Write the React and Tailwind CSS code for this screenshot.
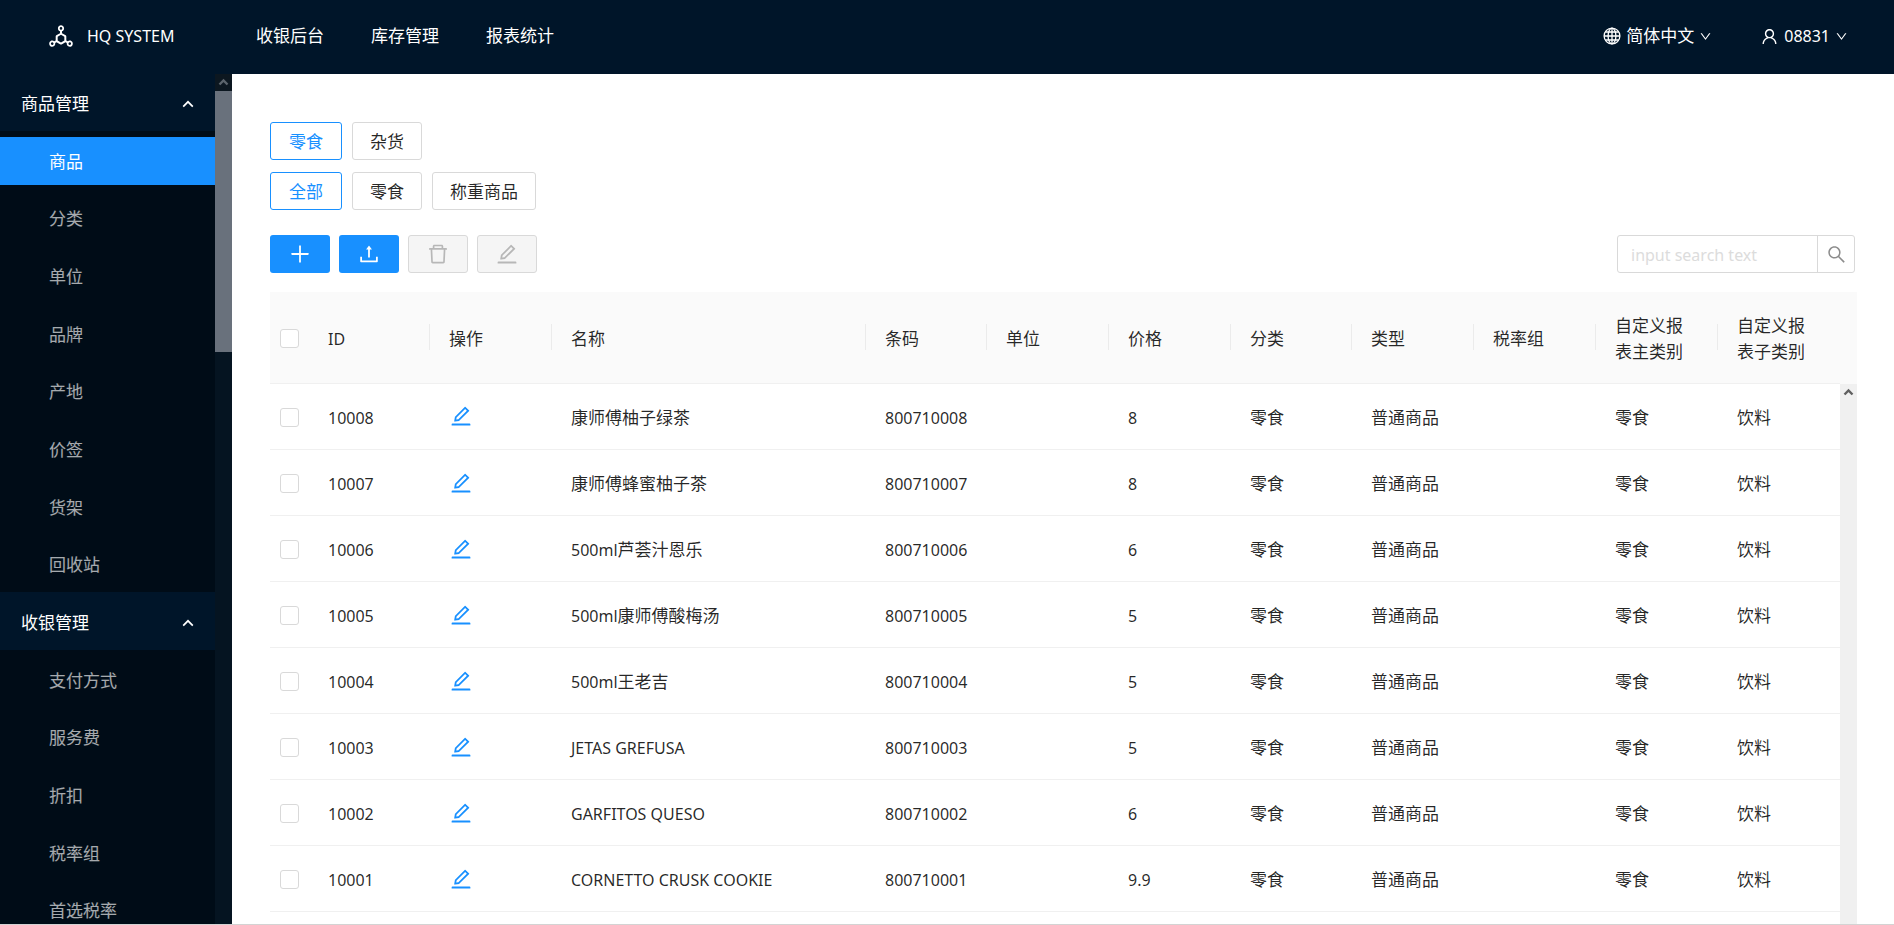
import React from "react";
import {
  AiOutlineDeploymentUnit,
  AiOutlineUser,
  AiOutlineDown,
  AiOutlinePlus,
  AiOutlineUpload,
  AiOutlineDelete,
  AiOutlineEdit,
  AiOutlineSearch,
} from "react-icons/ai";

const topNav = ["收银后台", "库存管理", "报表统计"];

const menu = [
  {
    title: "商品管理",
    height: "h-[461px]",
    items: ["商品", "分类", "单位", "品牌", "产地", "价签", "货架", "回收站"],
  },
  {
    title: "收银管理",
    height: "h-[288px]",
    items: ["支付方式", "服务费", "折扣", "税率组", "首选税率"],
  },
];

const columns = [
  "ID",
  "操作",
  "名称",
  "条码",
  "单位",
  "价格",
  "分类",
  "类型",
  "税率组",
  "自定义报表主类别",
  "自定义报表子类别",
];

const products = [
  { id: "10008", name: "康师傅柚子绿茶", price: "8" },
  { id: "10007", name: "康师傅蜂蜜柚子茶", price: "8" },
  { id: "10006", size: "500ml", name: "芦荟汁恩乐", price: "6" },
  { id: "10005", size: "500ml", name: "康师傅酸梅汤", price: "5" },
  { id: "10004", size: "500ml", name: "王老吉", price: "5" },
  { id: "10003", name: "JETAS GREFUSA", price: "5" },
  { id: "10002", name: "GARFITOS QUESO", price: "6" },
  { id: "10001", name: "CORNETTO CRUSK COOKIE", price: "9.9" },
];

function ScrollArrow({ className }) {
  return (
    <svg className={className} width="17" height="17" viewBox="0 0 17 17" aria-hidden="true">
      <path d="M4.5 10.5 L8.5 6.5 L12.5 10.5" fill="none" stroke="currentColor" strokeWidth="2.4" />
    </svg>
  );
}

function ChevronUp() {
  return (
    <svg width="12" height="8" viewBox="0 0 12 8" aria-hidden="true">
      <path d="M1.2 6.6 L6 1.8 L10.8 6.6" fill="none" stroke="currentColor" strokeWidth="1.7" />
    </svg>
  );
}

function Globe() {
  return (
    <svg width="18" height="18" viewBox="0 0 18 18" fill="none" stroke="currentColor" strokeWidth="1.3" aria-hidden="true">
      <circle cx="9" cy="9" r="7.9" />
      <ellipse cx="9" cy="9" rx="3.9" ry="7.9" />
      <path d="M9 1.1 V16.9 M1.1 9 H16.9 M2.3 5 H15.7 M2.3 13 H15.7" />
    </svg>
  );
}

function Checkbox({ label }) {
  return (
    <input
      type="checkbox"
      aria-label={label}
      className="block size-[19px] appearance-none rounded-[3px] border border-[#d9d9d9] bg-white checked:bg-[#1890ff]"
    />
  );
}

function FilterGroup({ options }) {
  return (
    <div className="flex gap-2.5">
      {options.map((option, i) => (
        <button
          key={option}
          type="button"
          className={
            i === 0
              ? "h-[38px] rounded-[3px] border border-[#1890ff] bg-white px-[18px] pt-0.5 text-[#1890ff]"
              : "h-[38px] rounded-[3px] border border-[#d9d9d9] bg-white px-[17px] pt-0.5"
          }
        >
          {option}
        </button>
      ))}
    </div>
  );
}

function Columns() {
  return (
    <colgroup>
      <col className="w-[39px]" />
      <col className="w-[121px]" />
      <col className="w-[122px]" />
      <col />
      <col className="w-[121px]" />
      <col className="w-[122px]" />
      <col className="w-[122px]" />
      <col className="w-[121px]" />
      <col className="w-[122px]" />
      <col className="w-[122px]" />
      <col className="w-[122px]" />
      <col className="w-[122px]" />
    </colgroup>
  );
}

function Header() {
  return (
    <header className="flex h-[74px] shrink-0 items-center bg-[#001529] pr-[46px] pb-0.5 text-white">
      <a href="#" className="flex w-[256px] items-center gap-3 pl-[47px] text-[16px]">
        <AiOutlineDeploymentUnit size={28} />
        HQ SYSTEM
      </a>
      <nav className="flex gap-[47px]">
        {topNav.map((item) => (
          <a key={item} href="#">
            {item}
          </a>
        ))}
      </nav>
      <div className="ml-auto flex items-center gap-12">
        <button type="button" className="flex items-center gap-[5px]">
          <Globe />
          简体中文
          <AiOutlineDown size={13} />
        </button>
        <button type="button" className="flex items-center gap-[5px] text-[16px]">
          <AiOutlineUser size={19} />
          08831
          <AiOutlineDown size={13} />
        </button>
      </div>
    </header>
  );
}

function Sidebar() {
  return (
    <aside className="flex w-[232px] shrink-0 overflow-hidden bg-[#001529]">
      <nav className="min-w-0 flex-1">
        {menu.map((group, g) => (
          <section key={group.title}>
            <button
              type="button"
              className={
                g === 0
                  ? "flex h-[57px] w-full items-center justify-between pt-[3px] pr-[21px] pl-[21px] text-white"
                  : "flex h-[58px] w-full items-center justify-between pt-[3px] pr-[21px] pl-[21px] text-white"
              }
            >
              {group.title}
              <ChevronUp />
            </button>
            <ul className={`grid auto-rows-fr bg-[#000c17] ${group.height}`}>
              {group.items.map((item, i) => (
                <li key={item} className="flex items-center pt-0.5">
                  <a
                    href="#"
                    className={
                      g === 0 && i === 0
                        ? "flex h-12 w-full items-center bg-[#1890ff] pt-0.5 pl-[49px] text-white"
                        : "flex h-12 w-full items-center pt-0.5 pl-[49px] text-white/65"
                    }
                  >
                    {item}
                  </a>
                </li>
              ))}
            </ul>
          </section>
        ))}
      </nav>
      <div className="w-[17px] bg-[#051421]">
        <ScrollArrow className="bg-[#0c1720] text-[#5c646c]" />
        <div className="h-[261px] bg-[#69717c]" />
      </div>
    </aside>
  );
}

function ProductTable() {
  return (
    <div className="mt-[19px] flex min-h-0 flex-1 flex-col overflow-hidden">
      <div className="shrink-0 bg-[#fafafa] pr-[17px]">
        <table className="w-full table-fixed">
          <Columns />
          <thead>
            <tr className="h-[91px] border-b border-[#f0f0f0]">
              <th scope="col" className="pt-0.5 pl-2.5">
                <Checkbox label="全选" />
              </th>
              {columns.map((column, i) => (
                <th key={column} scope="col" className="p-0 text-left font-normal">
                  <div
                    className={
                      i === columns.length - 1
                        ? "flex h-[26px] items-center px-[19px] pt-1"
                        : "flex h-[26px] items-center border-r border-[#ebebeb] px-[19px] pt-1"
                    }
                  >
                    <span className={i === 0 ? "text-[16px]" : ""}>{column}</span>
                  </div>
                </th>
              ))}
            </tr>
          </thead>
        </table>
      </div>
      <div className="flex min-h-0 flex-1 overflow-hidden">
        <div className="min-w-0 flex-1">
          <table className="w-full table-fixed">
            <Columns />
            <tbody>
              {products.map((p) => (
                <tr key={p.id} className="h-[66px] border-b border-[#f0f0f0]">
                  <td className="pt-0.5 pl-2.5">
                    <Checkbox label={p.id} />
                  </td>
                  <td className="px-[19px] pt-[3px] text-[16px]">{p.id}</td>
                  <td className="px-[19px]">
                    <button type="button" aria-label="编辑" className="block text-[#1890ff]">
                      <AiOutlineEdit size={24} />
                    </button>
                  </td>
                  <td className="px-[19px] pt-[3px]">
                    {p.size && <span className="text-[16px]">{p.size}</span>}
                    <span className={/^[A-Z ]+$/.test(p.name) ? "text-[16px]" : ""}>{p.name}</span>
                  </td>
                  <td className="px-[19px] pt-[3px] text-[16px]">8007{p.id}</td>
                  <td />
                  <td className="px-[19px] pt-[3px] text-[16px]">{p.price}</td>
                  <td className="px-[19px] pt-[3px]">零食</td>
                  <td className="px-[19px] pt-[3px]">普通商品</td>
                  <td />
                  <td className="px-[19px] pt-[3px]">零食</td>
                  <td className="px-[19px] pt-[3px]">饮料</td>
                </tr>
              ))}
            </tbody>
          </table>
        </div>
        <div className="w-[17px] bg-[#f0f0f0]">
          <ScrollArrow className="text-[#606060]" />
        </div>
      </div>
    </div>
  );
}

export default function App() {
  return (
    <div className="flex h-screen flex-col overflow-hidden bg-white font-['Noto_Sans','Noto_Sans_CJK_SC',sans-serif] text-[17px] leading-[26px] text-black/85">
      <Header />
      <div className="flex min-h-0 flex-1">
        <Sidebar />
        <main className="flex min-w-0 flex-1 flex-col pt-12 pr-[37px] pl-[38px]">
          <div className="flex flex-col gap-3">
            <FilterGroup options={["零食", "杂货"]} />
            <FilterGroup options={["全部", "零食", "称重商品"]} />
          </div>
          <div className="mt-[25px] flex items-center justify-between pr-0.5">
            <div className="flex gap-[9px]">
              <button type="button" aria-label="新增" className="flex h-[38px] w-[60px] items-center justify-center rounded-[3px] bg-[#1890ff] text-white">
                <AiOutlinePlus size={24} />
              </button>
              <button type="button" aria-label="导入" className="flex h-[38px] w-[60px] items-center justify-center rounded-[3px] bg-[#1890ff] text-white">
                <AiOutlineUpload size={24} />
              </button>
              <button type="button" disabled aria-label="删除" className="flex h-[38px] w-[60px] items-center justify-center rounded-[3px] border border-[#d9d9d9] bg-[#f5f5f5] text-black/25">
                <AiOutlineDelete size={24} />
              </button>
              <button type="button" disabled aria-label="批量编辑" className="flex h-[38px] w-[60px] items-center justify-center rounded-[3px] border border-[#d9d9d9] bg-[#f5f5f5] text-black/25">
                <AiOutlineEdit size={24} />
              </button>
            </div>
            <form className="flex h-[38px] w-[238px] rounded-[3px] border border-[#d9d9d9]" onSubmit={(e) => e.preventDefault()}>
              <input
                type="text"
                aria-label="搜索"
                placeholder="input search text"
                className="min-w-0 flex-1 bg-transparent px-[13px] pt-0.5 text-[16px] outline-none placeholder:text-[#dcdcdc]"
              />
              <button type="submit" aria-label="搜索" className="flex w-[37px] items-center justify-center border-l border-[#d9d9d9] text-black/45">
                <AiOutlineSearch size={21} />
              </button>
            </form>
          </div>
          <ProductTable />
        </main>
      </div>
      <div className="h-px shrink-0 bg-[#d3d3d3]" />
    </div>
  );
}
